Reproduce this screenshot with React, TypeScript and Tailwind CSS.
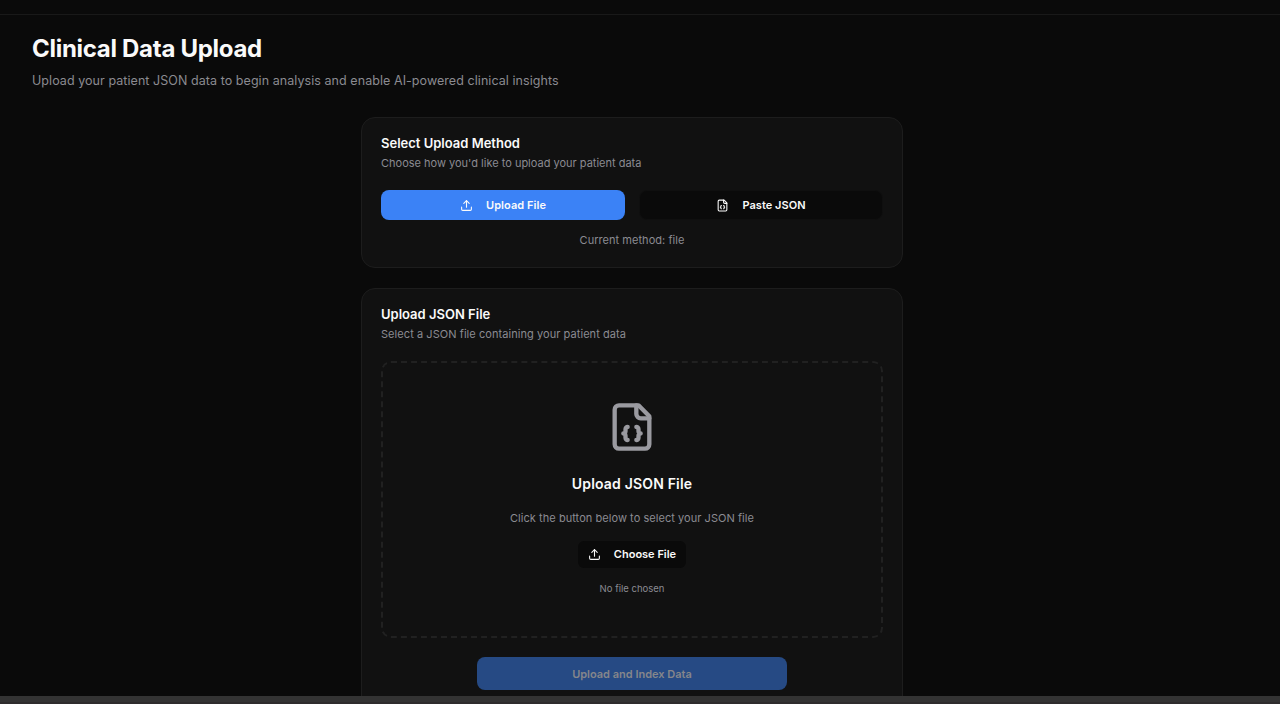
import type { ReactNode } from "react";
import { Upload } from "lucide-react";

function JsonFileIcon({ className }: { className: string }) {
  return (
    <svg viewBox="0 0 24 24" fill="none" stroke="currentColor" strokeWidth="2" strokeLinecap="round" strokeLinejoin="round" className={`shrink-0 ${className}`}>
      <path d="M15 2H6a2 2 0 0 0-2 2v16a2 2 0 0 0 2 2h12a2 2 0 0 0 2-2V7Z" />
      <path d="M14 2v4a2 2 0 0 0 2 2h4" />
      <path d="M10 12a1 1 0 0 0-1 1v1a1 1 0 0 1-1 1 1 1 0 0 1 1 1v1a1 1 0 0 0 1 1" />
      <path d="M14 18a1 1 0 0 0 1-1v-1a1 1 0 0 1 1-1 1 1 0 0 1-1-1v-1a1 1 0 0 0-1-1" />
    </svg>
  );
}

function Card({ title, note, className, children }: { title: string; note: ReactNode; className: string; children: ReactNode }) {
  return (
    <section className={`rounded-[14px] border border-[#1d1d1d] bg-[#111111] px-[19px] pt-[15px] ${className}`}>
      <h2 className="h-5 text-[13px] leading-5 font-semibold whitespace-nowrap text-[#fafafa]">{title}</h2>
      <p className="h-5 text-[11px] leading-5 whitespace-nowrap text-[#8b8b91]">{note}</p>
      {children}
    </section>
  );
}

export default function App() {
  return (
    <div className="flex h-[704px] w-full flex-col overflow-hidden bg-[#0a0a0a] font-['Inter','Liberation_Sans',sans-serif] text-[#fafafa]">
      <div className="h-[15px] shrink-0 border-b border-[#191919]" />
      <main className="min-h-0 flex-1 overflow-hidden">
        <header className="h-[102px] pt-[18px] pl-8">
          <h1 className="h-8 w-fit text-[24px] leading-8 font-bold tracking-[-0.29px] whitespace-nowrap">Clinical Data Upload</h1>
          <p className="mt-[6px] w-fit text-[12.5px] leading-5 tracking-[0.06px] whitespace-nowrap text-[#8b8b91]">
            Upload your patient JSON data to begin analysis and enable AI-powered clinical insights
          </p>
        </header>
        <div className="ml-[361px] flex w-[542px] flex-col gap-5">
          <Card title="Select Upload Method" note="Choose how you'd like to upload your patient data" className="h-[151px]">
            <div className="mt-[17px] grid grid-cols-2 gap-[14px]">
              <button className="flex h-[30px] items-center justify-center gap-[13px] rounded-[8px] bg-[#3b82f6] text-[11px] font-semibold tracking-[0.05px]">
                <Upload size={13} />
                <span className="pt-px">Upload File</span>
              </button>
              <button className="flex h-[30px] items-center justify-center gap-[13px] rounded-[8px] border border-[#0f0f0f] bg-[#0a0a0a] text-[11px] font-semibold tracking-[0.05px]">
                <JsonFileIcon className="size-[13px]" />
                <span className="pt-px">Paste JSON</span>
              </button>
            </div>
            <p className="mt-[10px] text-center text-[11px] leading-5 tracking-[0.04px] text-[#8b8b91]">Current method: file</p>
          </Card>
          <Card
            title="Upload JSON File"
            note={<span className="tracking-[0.06px]">Select a JSON file containing your patient data</span>}
            className="h-[440px]"
          >
            <div className="mt-[17px] flex h-[277px] flex-col items-center rounded-[10px] border-2 border-dashed border-[#212121] pt-[38px]">
              <JsonFileIcon className="size-[52px] text-[#9a9aa0]" />
              <h3 className="mt-[19px] text-[14px] leading-6 font-semibold tracking-[0.18px] whitespace-nowrap">Upload JSON File</h3>
              <p className="mt-[12px] text-[11px] leading-5 tracking-[0.05px] whitespace-nowrap text-[#8b8b91]">Click the button below to select your JSON file</p>
              <button className="mt-[13px] flex h-[27px] w-[108px] shrink-0 items-center justify-center gap-[13px] rounded-[6px] bg-[#0a0a0a] text-[11px] font-semibold whitespace-nowrap">
                <Upload size={13} />
                <span>Choose File</span>
              </button>
              <p className="mt-[11px] text-[9.5px] leading-5 text-[#8b8b91]">No file chosen</p>
            </div>
            <button className="mx-auto mt-[19px] flex h-[33px] w-[310px] items-center justify-center rounded-[8px] bg-[#264a84] pt-px text-[11px] font-semibold text-[#85868b]">
              Upload and Index Data
            </button>
          </Card>
        </div>
      </main>
      <footer className="h-2 shrink-0 border-b-2 border-[#2e2c2d] bg-[#333333]" />
    </div>
  );
}
